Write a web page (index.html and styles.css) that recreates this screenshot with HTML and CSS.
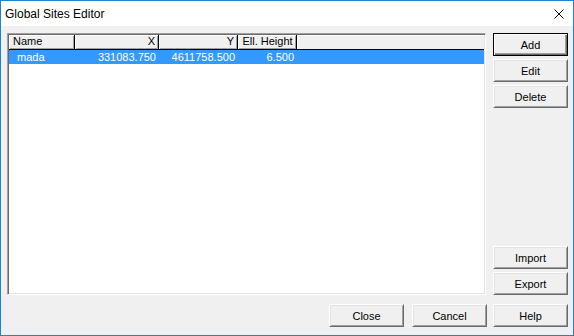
FILE: index.html
```html
<!DOCTYPE html>
<html lang="en">
<head>
    <meta charset="UTF-8">
    <meta name="viewport" content="width=device-width, initial-scale=1.0">
    <title>Global Sites Editor</title>

    <link rel="stylesheet" href="styles.css">
</head>
<body>
    <div class="window">
        <div class="titlebar">
            <span class="title">Global Sites Editor</span>
            <svg class="close-x" width="10" height="10" viewBox="0 0 10 10">
                <path d="M0.5 0.5 L9.5 9.5 M9.5 0.5 L0.5 9.5" stroke="#000" stroke-width="1" fill="none"/>
            </svg>
        </div>
        <div class="client">
            <div class="main">
                <div class="listview">
                    <div class="header">
                        <div class="hcol c-name">Name</div>
                        <div class="hcol c-x right">X</div>
                        <div class="hcol c-y right">Y</div>
                        <div class="hcol c-h center">Ell. Height</div>
                        <div class="hfill"></div>
                    </div>
                    <div class="row selected">
                        <div class="cell c-name indent">mada</div>
                        <div class="cell c-x right">331083.750</div>
                        <div class="cell c-y right">4611758.500</div>
                        <div class="cell c-h right">6.500</div>
                    </div>
                </div>
                <div class="side">
                    <div class="group">
                        <button class="btn default">Add</button>
                        <button class="btn">Edit</button>
                        <button class="btn">Delete</button>
                    </div>
                    <div class="group">
                        <button class="btn">Import</button>
                        <button class="btn">Export</button>
                    </div>
                </div>
            </div>
            <div class="bottom">
                <button class="btn">Close</button>
                <button class="btn cancel">Cancel</button>
                <button class="btn">Help</button>
            </div>
        </div>
    </div>
</body>
</html>
```

FILE: styles.css
```css
*{
    margin: 0;
    padding: 0;
    box-sizing: border-box;
}
body
{
    background-color: #fff;
    font-family: "Liberation Sans", Arial, sans-serif;
}
.window
{
    width: 574px;
    height: 336px;
    border: 1px solid #1883d7;
    display: flex;
    flex-direction: column;
}
.titlebar
{
    height: 25px;
    background-color: #fff;
    display: flex;
    align-items: center;
    justify-content: space-between;
    padding: 0 9px 0 4px;
}
.title
{
    font-size: 12px;
    color: #000;
}
.client
{
    flex: 1;
    background-color: #f0f0f0;
    padding: 7px 5px 8px 6px;
    display: flex;
    flex-direction: column;
}
.main
{
    display: flex;
    height: 262px;
    gap: 7px;
}
.listview
{
    width: 479px;
    background-color: #fff;
    border: 1px solid;
    border-color: #a0a0a0 #fff #fff #a0a0a0;
    box-shadow: inset 1px 1px #696969, inset -1px -1px #e3e3e3;
    padding: 1px;
    font-size: 11px;
}
.header
{
    display: flex;
    height: 15px;
    background-color: #f0f0f0;
    border-bottom: 1px solid #000;
}
.hcol
{
    height: 14px;
    line-height: 13px;
    border-right: 1px solid #000;
    box-shadow: inset 1px 1px #fff, inset -1px -1px #a0a0a0;
    padding: 0 3px 0 4px;
    color: #000;
    white-space: nowrap;
}
.hfill
{
    flex: 1;
    box-shadow: inset 1px 1px #fff;
}
.c-name
{
    width: 66px;
}
.c-x
{
    width: 84px;
}
.c-y
{
    width: 79px;
}
.c-h
{
    width: 59px;
}
.right
{
    text-align: right;
}
.center
{
    text-align: center;
}
.row
{
    display: flex;
    height: 14px;
    line-height: 14px;
}
.row.selected
{
    background-color: #3399ff;
    color: #fff;
}
.cell
{
    padding: 0 3px 0 4px;
    white-space: nowrap;
}
.cell.indent
{
    padding-left: 8px;
}
.side
{
    width: 75px;
    display: flex;
    flex-direction: column;
    justify-content: space-between;
}
.group
{
    display: flex;
    flex-direction: column;
    gap: 3px;
}
.btn
{
    width: 75px;
    height: 23px;
    background-color: #f0f0f0;
    border: 1px solid;
    border-color: #fff #696969 #696969 #fff;
    box-shadow: inset 1px 1px #e3e3e3, inset -1px -1px #a0a0a0;
    font-family: "Liberation Sans", Arial, sans-serif;
    font-size: 11px;
    color: #000;
}
.btn.default
{
    border: 1px solid #000;
    box-shadow: inset 1px 1px #fff, inset -1px -1px #696969, inset -2px -2px #a0a0a0;
}
.bottom
{
    margin-top: 9px;
    display: flex;
    justify-content: flex-end;
    gap: 6px;
}
.cancel
{
    margin-left: 2px;
}
```
